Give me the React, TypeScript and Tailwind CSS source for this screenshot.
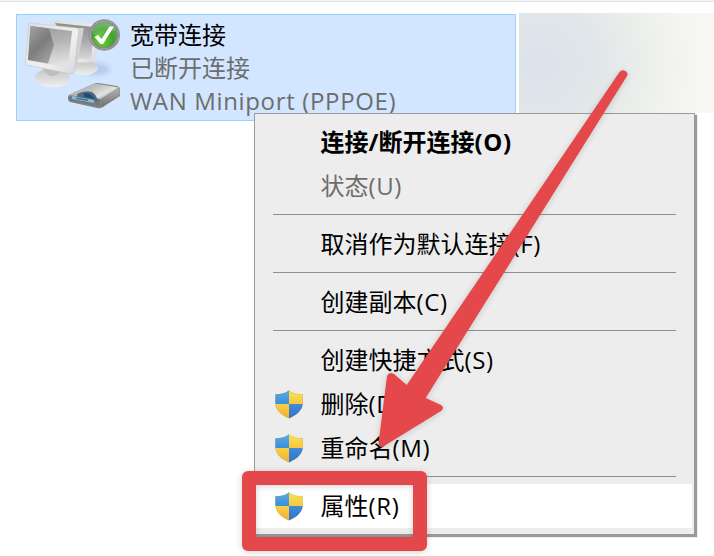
import React from "react";

function Shield() {
  return (
    <svg width="28" height="29" viewBox="0 0 28 29" className="block">
      <defs>
        <linearGradient id="sb" x1="0" y1="0" x2="0" y2="1">
          <stop offset="0" stopColor="#62abe0" />
          <stop offset="1" stopColor="#388fdb" />
        </linearGradient>
        <linearGradient id="sy" x1="0" y1="0" x2="0" y2="1">
          <stop offset="0" stopColor="#f8e25a" />
          <stop offset="1" stopColor="#f6c840" />
        </linearGradient>
        <linearGradient id="so" x1="0" y1="0" x2="0" y2="1">
          <stop offset="0" stopColor="#f8d047" />
          <stop offset="1" stopColor="#eeb033" />
        </linearGradient>
        <linearGradient id="sd" x1="0" y1="0" x2="0" y2="1">
          <stop offset="0" stopColor="#438bdc" />
          <stop offset="1" stopColor="#3070ca" />
        </linearGradient>
        <clipPath id="shape">
          <path d="M14 .3C11 2.8 6 4.2 .3 4.2V13C.3 20 6 25 14 28.4C22 25 27.8 20 27.8 13V4.2C22 4.2 17 2.8 14 .3Z" />
        </clipPath>
      </defs>
      <g clipPath="url(#shape)">
        <rect width="14" height="14" fill="url(#sb)" />
        <rect x="14" width="14" height="14" fill="url(#sy)" />
        <rect y="14" width="14" height="15" fill="url(#so)" />
        <rect x="14" y="14" width="14" height="15" fill="url(#sd)" />
        <path d="M14 .3C11 2.8 6 4.2 .3 4.2V13C.3 20 6 25 14 28.4C22 25 27.8 20 27.8 13V4.2C22 4.2 17 2.8 14 .3Z" fill="none" stroke="#997c30" strokeOpacity=".3" strokeWidth="1" />
      </g>
    </svg>
  );
}

function NetworkIcon() {
  return (
    <svg width="110" height="105" viewBox="17 15 110 105" className="block">
      <defs>
        <linearGradient id="screen" x1="0" y1="0" x2="0" y2="1">
          <stop offset="0" stopColor="#8c8c8c" />
          <stop offset=".5" stopColor="#ababab" />
          <stop offset="1" stopColor="#dadada" />
        </linearGradient>
        <linearGradient id="glare" x1="0" y1="0" x2=".15" y2="1">
          <stop offset="0" stopColor="#9c9c9c" />
          <stop offset=".45" stopColor="#b4b4b4" />
          <stop offset="1" stopColor="#e2e2e2" />
        </linearGradient>
        <linearGradient id="darkside" x1="0" y1="0" x2=".7" y2="1">
          <stop offset="0" stopColor="#a4a4a4" />
          <stop offset=".55" stopColor="#7c7c7c" />
          <stop offset="1" stopColor="#a0a0a0" />
        </linearGradient>
        <linearGradient id="foot" x1="0" y1="0" x2="0" y2="1">
          <stop offset="0" stopColor="#c4c4c4" />
          <stop offset="1" stopColor="#f0f0f0" />
        </linearGradient>
        <linearGradient id="frame" x1="0" y1="0" x2="1" y2="1">
          <stop offset="0" stopColor="#dcdddf" />
          <stop offset=".6" stopColor="#f0f0f0" />
          <stop offset="1" stopColor="#d4d6d8" />
        </linearGradient>
        <linearGradient id="modem" x1="0" y1="0" x2="1" y2=".6">
          <stop offset="0" stopColor="#9b9b9b" />
          <stop offset=".5" stopColor="#c2c2c1" />
          <stop offset=".8" stopColor="#e2e2e0" />
          <stop offset="1" stopColor="#999" />
        </linearGradient>
        <linearGradient id="modemSide" x1="0" y1="0" x2="0" y2="1">
          <stop offset="0" stopColor="#b5b5b5" />
          <stop offset="1" stopColor="#6e6e6e" />
        </linearGradient>
        <radialGradient id="green" cx=".4" cy=".75" r=".75">
          <stop offset="0" stopColor="#6fd035" />
          <stop offset=".6" stopColor="#3da52c" />
          <stop offset="1" stopColor="#62a956" />
        </radialGradient>
        <filter id="soft" x="-.3" y="-.3" width="1.6" height="1.6">
          <feGaussianBlur stdDeviation="2.4" />
        </filter>
        <filter id="smooth" x="-.1" y="-.1" width="1.2" height="1.2">
          <feGaussianBlur stdDeviation=".65" />
        </filter>
      </defs>
      <ellipse cx="96" cy="69" rx="14" ry="6" fill="#789ac0" opacity=".35" filter="url(#soft)" />
      <g filter="url(#smooth)">
        <ellipse cx="84" cy="68" rx="14" ry="7" fill="url(#foot)" />
        <path d="M53 21Q53 20 55 20L100 25L95 62L76 63L53 59Z" fill="url(#frame)" />
        <path d="M55 23L94 27L91 60L77 58Z" fill="url(#screen)" />
        <path d="M76 28L84 28L78 61L75 70L70 74Z" fill="#d0d1d2" />
        <path d="M42 64L62 68L59 76H44Z" fill="#b9b9b9" />
        <ellipse cx="52.500" cy="78" rx="17.500" ry="9.500" fill="url(#foot)" />
        <path d="M43 66L62 70Q58 76 51 76Q44 74 43 66Z" fill="#bdbebe" />
        <path d="M28.500 24Q29 23 31 23L77 28Q79 29 78.600 31L74 72Q73.500 74 71 74L27 65Q25 64 25.500 62Z" fill="url(#frame)" stroke="#bfc2c5" strokeWidth=".5" />
        <path d="M30.500 26L72 31L68 68L28 60Z" fill="url(#glare)" />
        <path d="M30.500 26L49 28.500L54 45L48 63.500L28 60Z" fill="url(#darkside)" />
      </g>
      <g filter="url(#smooth)">
        <path d="M68 97Q68 95 71 94L93 84Q95 83 98 83L117 86Q120 87 120 89V96L103 107Q100 109 97 108L70 102Q68 101 68 99Z" fill="#858585" />
        <path d="M69 95L93 84Q95 83.500 98 84L119 87.500L101 99Z" fill="url(#modem)" />
        <path d="M101 99L119.500 88V95L102 107Z" fill="url(#modemSide)" />
        <path d="M69 96L100 100V107L70 101Z" fill="#75797d" />
        <path d="M77 94Q85 90 92 92Q97 95 98 102L78 99Z" fill="#526b80" />
        <path d="M84 93Q91 92 95 99L84 97Z" fill="#214b70" />
        <path d="M72 96L94 100V103L72 99Z" fill="#83bde2" />
        <path d="M76 97.500L88 99.500V101L76 99Z" fill="#467194" />
      </g>
      <circle cx="104.300" cy="35" r="14.800" fill="#dcdedf" stroke="#8f9193" strokeWidth="1.800" />
      <circle cx="104.300" cy="35" r="13" fill="url(#green)" stroke="#7e8481" strokeWidth="1.400" />
      <path d="M92 31Q96 22 104 22Q113 22 116 31Q105 30 99 37Q94 36 92 31Z" fill="#fff" opacity=".14" />
      <path d="M94.500 37L98 35L101.500 39L109.500 26.500H114L103 44H100.500Z" fill="#fff" />
    </svg>
  );
}

function Item({ children, shield = false, className = "" }: { children: React.ReactNode; shield?: boolean; className?: string }) {
  return (
    <div className={`mr-[2px] flex h-11 items-center pl-[20px] ${className}`}>
      <div className="w-[45.500px]">{shield && <Shield />}</div>
      <span className="whitespace-nowrap pb-[2px]">{children}</span>
    </div>
  );
}

function Latin({ children }: { children: React.ReactNode }) {
  return <span className="tracking-[0.65px]">{children}</span>;
}

function Separator() {
  return (
    <div className="h-[14px] pl-[18px] pr-[18px] pt-[6px]">
      <div className="h-px bg-[#8f9090]" />
    </div>
  );
}

export default function App() {
  return (
    <div className="relative h-[556px] w-[714px] overflow-hidden bg-white font-['Open_Sans','Noto_Sans_CJK_SC',sans-serif] text-[24px] leading-[33px] text-black">
      <div className="h-[2px] border-b border-[#e2e2e2] bg-[#f5f5f5]" />
      <div className="flex pt-[11px]">
        <div className="ml-4 mt-px flex h-[107px] w-[500px] border border-[#99d1ff] bg-[#d2e6ff]">
          <div className="w-[113px] shrink-0"><NetworkIcon /></div>
          <div className="pt-[3px]">
            <div className="whitespace-nowrap">宽带连接</div>
            <div className="whitespace-nowrap text-[#6d6d6d]">已断开连接</div>
            <div className="whitespace-nowrap text-[#6d6d6d]"><Latin>WAN Miniport (PPPOE)</Latin></div>
          </div>
        </div>
        <div className="ml-[3px] h-[100px] w-[195px] bg-[radial-gradient(circle_190px_at_20px_50px,#dce2ec_0%,#e1e6e9_30%,#edefeb_58%,#f5f6f1_80%,#f9f9f8_100%)]" />
      </div>

      <div className="absolute left-[254px] top-[113px] h-[422px] w-[441px] border border-[#999b9b] bg-[#ededed] py-[6px] shadow-[2px_2px_1px_#999]">
        <Item className="font-bold">连接/断开连接<Latin>(O)</Latin></Item>
        <Item className="text-[#6d6d6d]">状态<Latin>(U)</Latin></Item>
        <Separator />
        <Item>取消作为默认连接<Latin>(F)</Latin></Item>
        <Separator />
        <Item>创建副本<Latin>(C)</Latin></Item>
        <Separator />
        <Item>创建快捷方式<Latin>(S)</Latin></Item>
        <Item shield>删除<Latin>(D)</Latin></Item>
        <Item shield>重命名<Latin>(M)</Latin></Item>
        <Separator />
        <Item shield className="bg-white">属性<Latin>(R)</Latin></Item>
      </div>

      <div className="absolute left-[242px] top-[471px] h-[80px] w-[185px] rounded-[6px] border-[14px] border-[#e5484b] drop-shadow-[0_1px_3px_rgba(0,0,0,0.18)]" />
      <svg className="absolute left-0 top-0 drop-shadow-[0_1px_3px_rgba(0,0,0,0.16)]" width="714" height="556" viewBox="0 0 714 556">
        <path d="M619.500 72Q622 69 625.500 71Q628.500 73 627 76L425.700 398L441 405Q445 408 441 411L384 446Q379 449 378.500 443L387 376Q389 371.500 394 374L406.700 385Z" fill="#e5484b" />
      </svg>
    </div>
  );
}
